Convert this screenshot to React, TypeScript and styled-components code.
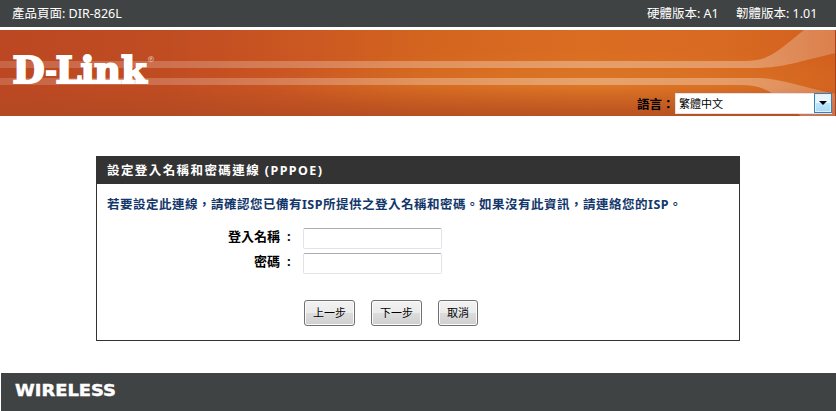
import type { ReactNode } from "react";
import styled, { createGlobalStyle } from "styled-components";

const GlobalStyle = createGlobalStyle`
    * {
        box-sizing: border-box;
    }
    body {
        margin: 0;
        background: #fff;
        font-family: "Noto Sans", "Noto Sans CJK TC", sans-serif;
        font-size: 12px;
        color: #000;
        overflow: hidden;
    }
`;

const Page = styled.div`
    display: flex;
    flex-direction: column;
    width: 836px;
    height: 411px;
`;

const TopBar = styled.div`
    display: flex;
    height: 27px;
    padding: 0 19px 0 12px;
    background: #404343;
    color: #fff;
    line-height: 27px;
    white-space: nowrap;
`;

const TopItem = styled.span<{ $width: number; $push?: boolean }>`
    width: ${(p) => p.$width}px;
    margin-left: ${(p) => (p.$push ? "auto" : "0")};
    font-size: 12.5px;

    & + & + & {
        margin-left: 18px;
    }
`;

const Banner = styled.header`
    display: grid;
    height: 86px;
    margin-top: 3px;
    overflow: hidden;

    & > * {
        grid-area: 1 / 1;
    }
`;

const BannerArt = styled.svg`
    display: block;
    width: 836px;
    height: 86px;
`;

const Logo = styled.svg`
    display: block;
    width: 160px;
    height: 86px;
    font-family: "DejaVu Serif", serif;
    font-weight: bold;
    fill: #fff;
    stroke: #fff;
`;

const Language = styled.label`
    display: flex;
    align-self: end;
    justify-self: end;
    align-items: center;
    height: 21px;
    margin: 0 4px 2px 0;
    font-size: 13px;
    font-weight: bold;
`;

const LanguageText = styled.span`
    width: 38px;
    font-size: 12.5px;
    white-space: nowrap;
`;

const Select = styled.span`
    display: flex;
    width: 157px;
    height: 21px;
    border: 1px solid #e2e3ea;
    border-right: 0;
    background: #fff;
    font-size: 11px;
    font-weight: normal;
    line-height: 19px;
`;

const SelectValue = styled.span`
    flex: 1;
    padding-left: 3px;
`;

const Arrow = styled.span`
    display: flex;
    align-items: center;
    justify-content: center;
    width: 18px;
    height: 20px;
    margin-top: -1px;
    border: 1px solid #3c7fb1;
    background: linear-gradient(#eaf6fd 0 48%, #bee6fd 52%, #a7d9f5);
    box-shadow: inset 0 0 0 1px #dff2fc;

    &::after {
        content: "";
        border: 4px solid transparent;
        border-top-color: #000;
        border-bottom: 0;
    }
`;

const Panel = styled.main`
    width: 644px;
    height: 185px;
    margin: 40px 0 0 96px;
    border: 1px solid #333;
`;

const PanelTitle = styled.h1`
    height: 27px;
    margin: 0;
    padding-left: 10px;
    background: #333;
    color: #fff;
    font-size: 12.5px;
    font-weight: bold;
    line-height: 28px;
    letter-spacing: 1.42px;
`;

const Hint = styled.p`
    height: 43px;
    margin: 0;
    padding: 12px 0 0 10px;
    color: #13376b;
    font-size: 12.5px;
    font-weight: bold;
    line-height: 18px;
    letter-spacing: 0.5px;
    white-space: nowrap;
`;

const FieldRow = styled.label`
    display: flex;
    height: 25px;
    gap: 8px;
    font-size: 13px;
    font-weight: bold;
    line-height: 19px;
`;

const FieldLabel = styled.span`
    display: flex;
    justify-content: flex-end;
    gap: 7px;
    width: 198px;

    &::after {
        content: ":";
        width: 8px;
    }
`;

const Input = styled.input`
    width: 139px;
    height: 21px;
    margin: 1px 0 0;
    border: 1px solid #e2e3ea;
    border-top-color: #abadb3;
    border-radius: 2px;
    outline: none;
`;

const Actions = styled.div`
    display: flex;
    gap: 16px;
    padding: 23px 0 0 207px;
`;

const Button = styled.button<{ $width: number }>`
    width: ${(p) => p.$width}px;
    height: 26px;
    padding: 0;
    border: 1px solid #707070;
    border-radius: 3px;
    background: linear-gradient(#f2f2f2, #ebebeb 50%, #dddddd 50%, #cfcfcf);
    box-shadow: inset 0 0 0 1px #fbfbfb;
    font: 11px/22px "Noto Sans", "Noto Sans CJK TC", sans-serif;
    color: #000;
`;

const Footer = styled.footer`
    height: 38px;
    margin: 32px 0 0 1px;
    background: #404343;
`;

const Wordmark = styled.svg`
    display: block;
    width: 130px;
    height: 36px;
    font: bold 15px "DejaVu Sans", sans-serif;
    fill: #fff;
    stroke: #fff;
`;

const Field = ({ label, type = "text" }: { label: ReactNode; type?: string }) => (
    <FieldRow>
        <FieldLabel>{label}</FieldLabel>
        <Input type={type} />
    </FieldRow>
);

const BannerBackground = () => (
    <BannerArt viewBox="0 0 836 86" aria-hidden="true">
        <defs>
            <linearGradient id="base" x1="0" x2="1" y1="0" y2="0">
                <stop offset="0" stopColor="#bc4823" />
                <stop offset="0.2" stopColor="#c04c22" />
                <stop offset="0.36" stopColor="#cb5722" />
                <stop offset="0.5" stopColor="#d3641f" />
                <stop offset="0.7" stopColor="#da6d22" />
                <stop offset="0.86" stopColor="#d86a22" />
                <stop offset="1" stopColor="#d2601f" />
            </linearGradient>
            <radialGradient id="glow" cx="0.71" cy="0.62" r="0.4">
                <stop offset="0" stopColor="#de8028" stopOpacity="0.5" />
                <stop offset="1" stopColor="#de8028" stopOpacity="0" />
            </radialGradient>
            <linearGradient id="shade" x1="0" x2="0" y1="0" y2="1">
                <stop offset="0.66" stopColor="#b04a22" stopOpacity="0" />
                <stop offset="1" stopColor="#b04a22" stopOpacity="0.8" />
            </linearGradient>
            <linearGradient id="band" gradientUnits="userSpaceOnUse" x1="0" x2="836" y1="0" y2="0">
                <stop offset="0" stopColor="#fff" stopOpacity="0.16" />
                <stop offset="0.35" stopColor="#fff" stopOpacity="0.24" />
                <stop offset="0.7" stopColor="#fff" stopOpacity="0.32" />
                <stop offset="0.9" stopColor="#fff" stopOpacity="0.3" />
                <stop offset="1" stopColor="#fff" stopOpacity="0.2" />
            </linearGradient>
        </defs>
        <rect width="836" height="86" fill="url(#base)" />
        <rect width="836" height="86" fill="url(#glow)" />
        <rect width="836" height="86" fill="url(#shade)" />
        <g fill="url(#band)">
            <path d="M0 31H745C768 31 774 24 804 0H836V23C803 30 785 38 755 38H0Z" />
            <path d="M0 48H755C782 48 800 57 836 64V86H801C786 76 774 55 742 55H0Z" />
        </g>
        <rect x="835" width="1" height="86" fill="#a94123" />
    </BannerArt>
);

const App = () => (
    <>
        <GlobalStyle />
        <Page>
            <TopBar>
                <TopItem $width={120}>產品頁面: DIR-826L</TopItem>
                <TopItem $width={71} $push>
                    硬體版本: A1
                </TopItem>
                <TopItem $width={81}>韌體版本: 1.01</TopItem>
            </TopBar>
            <Banner>
                <BannerBackground />
                <Logo viewBox="0 0 160 86">
                    <text y="53" fontSize="37" strokeWidth="2">
                        <tspan x="12.5">D</tspan>
                        <tspan x="45.5" y="51" fontSize="27">
                            -
                        </tspan>
                        <tspan x="55.5 80.5 94 121" y="53">
                            Link
                        </tspan>
                    </text>
                    <text x="147" y="32" fontSize="8" fontWeight="normal" strokeWidth="0" opacity="0.75">
                        ®
                    </text>
                </Logo>
                <Language>
                    <LanguageText>語言：</LanguageText>
                    <Select>
                        <SelectValue>繁體中文</SelectValue>
                        <Arrow />
                    </Select>
                </Language>
            </Banner>
            <Panel>
                <PanelTitle>設定登入名稱和密碼連線 (PPPOE)</PanelTitle>
                <Hint>若要設定此連線，請確認您已備有ISP所提供之登入名稱和密碼。如果沒有此資訊，請連絡您的ISP。</Hint>
                <Field label="登入名稱" />
                <Field label="密碼" type="password" />
                <Actions>
                    <Button $width={51}>上一步</Button>
                    <Button $width={51}>下一步</Button>
                    <Button $width={40}>取消</Button>
                </Actions>
            </Panel>
            <Footer>
                <Wordmark viewBox="0 0 130 36">
                    <text x="14" y="23" strokeWidth="0.4" textLength="101" lengthAdjust="spacingAndGlyphs">
                        WIRELESS
                    </text>
                </Wordmark>
            </Footer>
        </Page>
    </>
);

export default App;
